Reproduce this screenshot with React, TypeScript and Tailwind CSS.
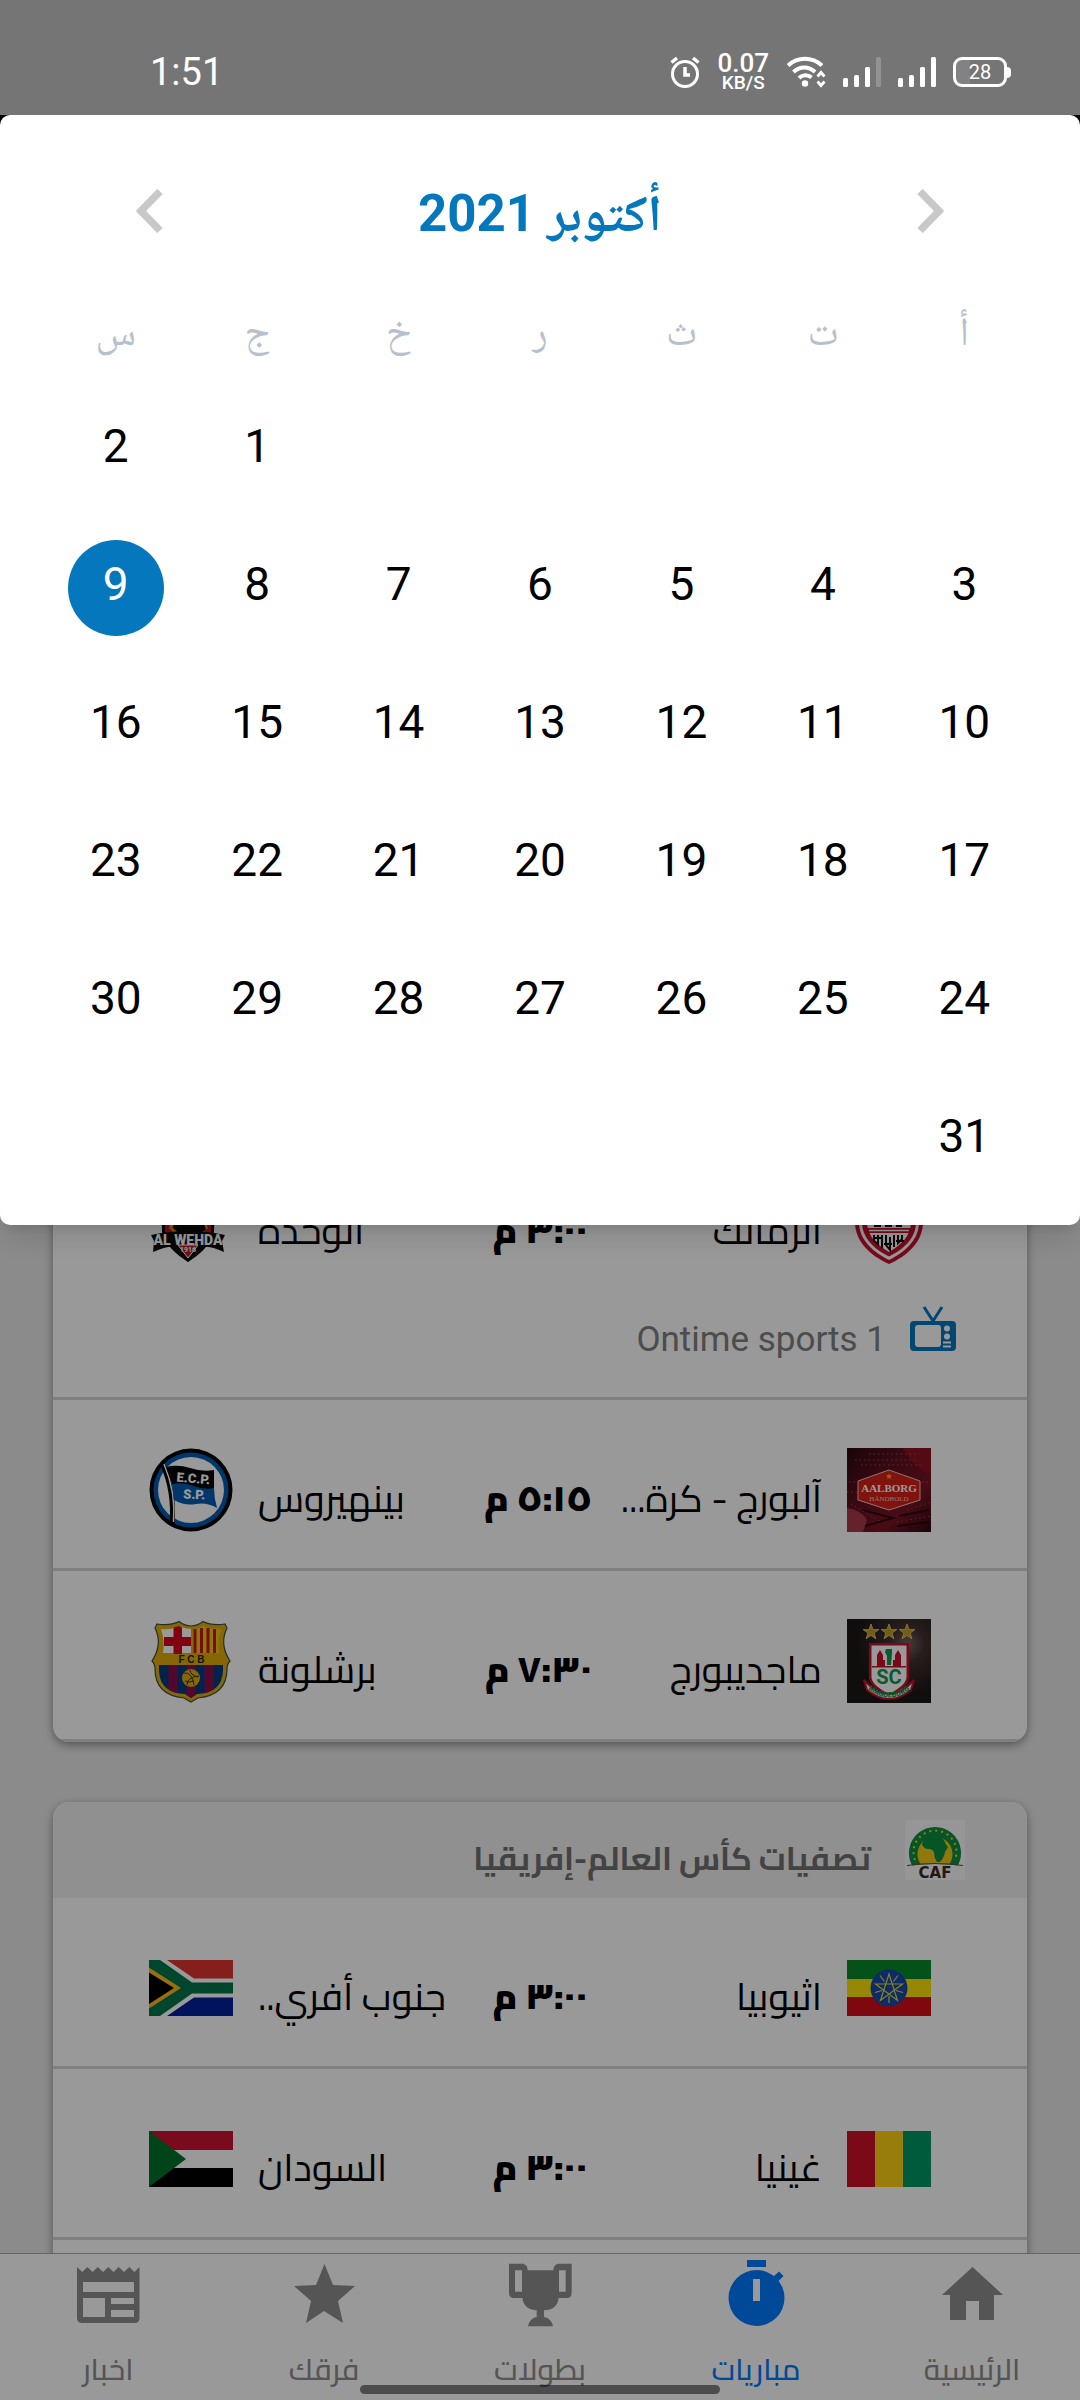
import type { ReactNode } from "react";

/* ---------- Status bar ---------- */

function AlarmIcon() {
  return (
    <svg viewBox="0 0 30 32" className="h-8 w-[30px]" fill="none" stroke="#fff" strokeWidth="3">
      <circle cx="15" cy="18" r="12.5" />
      <path d="M15 11v8h5" strokeWidth="3.5" />
      <path d="M1.5 6.5 7 2M28.5 6.5 23 2" strokeWidth="3.5" />
    </svg>
  );
}

function WifiIcon() {
  return (
    <svg viewBox="0 0 40 32" className="h-8 w-10" fill="none" stroke="#fff" strokeWidth="4">
      <path d="M2 9.5C12 .5 26 .5 36 9.5" />
      <path d="M7.500 16c6.500-6 15-6 21.500 0" />
      <path d="M13 22c3.500-3.500 9-3.500 12.500-.5" />
      <circle cx="19" cy="27.500" r="3.200" fill="#fff" stroke="none" />
      <path d="m31.500 20.500 3.500-4 3.500 4M31.500 25.500l3.500 4 3.500-4" strokeWidth="2.800" />
    </svg>
  );
}

function SignalIcon({ dimLast = false }: { dimLast?: boolean }) {
  return (
    <svg viewBox="0 0 38 30" className="h-[30px] w-[38px]" fill="#fff">
      <rect x="0" y="21" width="5" height="9" rx="1.500" />
      <rect x="11" y="18" width="5" height="12" rx="1.500" />
      <rect x="22" y="10" width="5" height="20" rx="1.500" />
      <rect x="33" y="0" width="5" height="30" rx="1.500" fill={dimLast ? "#929292" : "#fff"} />
    </svg>
  );
}

function StatusBar() {
  return (
    <div dir="ltr" className="flex h-[115px] shrink-0 items-center justify-between bg-[#757575] pt-[29px] pr-[69px] pl-[150px] font-['Roboto',sans-serif] text-white">
      <span className="text-[38px] leading-[44px]">1:51</span>
      <div className="flex items-center gap-[17px]">
        <AlarmIcon />
        <div className="flex flex-col items-center font-medium">
          <span className="text-[26px] leading-[22px]">0.07</span>
          <span className="text-[19px] leading-[18px]">KB/S</span>
        </div>
        <WifiIcon />
        <SignalIcon dimLast />
        <SignalIcon />
        <div className="flex items-center">
          <div className="flex h-[30px] w-[54px] items-center justify-center rounded-[9px] border-[3px] border-white bg-linear-to-r from-[#828282] from-30% to-transparent to-30% text-xl leading-5">
            28
          </div>
          <div className="h-[11px] w-1 rounded-r-sm bg-white" />
        </div>
      </div>
    </div>
  );
}

/* ---------- Calendar ---------- */

const WEEKDAYS = ["أ", "ت", "ث", "ر", "خ", "ج", "س"];
const SELECTED_DAY = 9;
const LEADING_BLANKS = 5;
const WEEKS: (number | null)[][] = Array.from({ length: 6 }, (_, week) =>
  Array.from({ length: 7 }, (_, day) => {
    const date = week * 7 + day - LEADING_BLANKS + 1;
    return date >= 1 && date <= 31 ? date : null;
  }),
);

function CalendarDialog() {
  return (
    <section role="dialog" aria-label="التقويم" className="absolute inset-x-0 top-0 rounded-[10px] bg-white px-[45px] pb-4 font-['Roboto','Noto_Naskh_Arabic',sans-serif] shadow-xl">
      <div className="flex h-[192px] items-center justify-between px-[72px]">
        <button type="button" aria-label="الشهر السابق" className="flex size-16 items-center justify-center">
          <svg viewBox="0 0 28 44" className="h-11 w-7" fill="none" stroke="#c8c8c8" strokeWidth="7.500">
            <path d="m3 2.500 19 19.500L3 41.500" />
          </svg>
        </button>
        <h2 className="pt-1.5 text-[51px] leading-[60px] font-bold text-[#0477bd]">أكتوبر 2021</h2>
        <button type="button" aria-label="الشهر التالي" className="flex size-16 items-center justify-center">
          <svg viewBox="0 0 28 44" className="h-11 w-7" fill="none" stroke="#c8c8c8" strokeWidth="7.500">
            <path d="M25 2.500 6 22l19 19.500" />
          </svg>
        </button>
      </div>
      <table className="w-full table-fixed text-center">
        <thead>
          <tr className="h-[74px]">
            {WEEKDAYS.map((day) => (
              <th key={day} scope="col" className="p-0 pb-6 text-center text-[40px] leading-[50px] font-normal text-[#b6c1cd]">
                {day}
              </th>
            ))}
          </tr>
        </thead>
        <tbody>
          {WEEKS.map((week, w) => (
            <tr key={w} className="h-[138px]">
              {week.map((date, d) => (
                <td key={d} className="p-0">
                  {date !== null && (
                    <button
                      type="button"
                      aria-pressed={date === SELECTED_DAY}
                      className={
                        date === SELECTED_DAY
                          ? "mx-auto flex size-24 items-center justify-center rounded-full bg-[#0477bd] pb-2 text-[46px] leading-[54px] text-white"
                          : "mx-auto flex size-24 items-center justify-center rounded-full pb-2 text-[46px] leading-[54px] text-black"
                      }
                    >
                      {date}
                    </button>
                  )}
                </td>
              ))}
            </tr>
          ))}
        </tbody>
      </table>
    </section>
  );
}

/* ---------- Club crests and flags ---------- */

function Crest({ children }: { children: ReactNode }) {
  return (
    <svg viewBox="0 0 84 84" direction="ltr" className="size-[84px] shrink-0" aria-hidden="true">
      {children}
    </svg>
  );
}

function ZamalekCrest() {
  return (
    <Crest>
      <path d="M8 4h68v38c0 20-16 34-34 42C24 76 8 62 8 42Z" fill="#c8102e" />
      <path d="M12 8h60v34c0 18-14 30-30 38C26 72 12 60 12 42Z" fill="#fff" />
      <path d="M15 11h54v31c0 16-12 27-27 34.500C27 69 15 58 15 42Z" fill="#c8102e" />
      <path d="M20 14h44v28c0 14-10 23-22 30C30 65 20 56 20 42Z" fill="#fff" />
      <path d="M27 44h7v3h-7zm11 0h7v3h-7zm11-1h6v4h-6z" fill="#111" />
      <path d="M17 48h50l-2 5H19Z" fill="#c8102e" />
      <path d="M22 50.500h40" stroke="#fff" strokeWidth="1.500" />
      <path d="M27 55v6l4 3V55m4 0v13m4-13v10l4 5V57m4-2v12m4-12v8l4-4v-4M26 58h8m3 6h8m4-3h8" stroke="#111" strokeWidth="2" fill="none" />
    </Crest>
  );
}

function WehdaCrest() {
  return (
    <Crest>
      <path d="M12 6h54l-1 46c-4 14-14 22-26 30C27 74 17 66 13 52Z" fill="#0c0c0c" />
      <path d="M16 10h46v42c-4 12-12 19-23 26C28 71 20 64 16 52Z" fill="#c01a26" />
      <path d="M24 34h30l5 14-8 8H28l-8-8Z" fill="#f08020" />
      <path d="M27 30h24l6 20-12 6H33L24 48Z" fill="#0c0c0c" />
      <path d="M2 55q37-8 74 0l-3 6 2 11Q62 66 53 67l-14 15-14-15Q18 66 4 72l1-11Z" fill="#0c0c0c" />
      <path d="M29 65h20l-10 13Z" fill="#c01a26" stroke="#fff" strokeWidth="1" />
      <text x="39" y="65" textAnchor="middle" fontFamily="Roboto, sans-serif" fontWeight="900" fontSize="14" fill="#fff">AL WEHDA</text>
      <text x="39" y="72" textAnchor="middle" fontFamily="Roboto, sans-serif" fontWeight="700" fontSize="7" fill="#fff">1916</text>
    </Crest>
  );
}

function AalborgCrest() {
  return (
    <Crest>
      <defs>
        <linearGradient id="aalborg-bg" x1="0" y1="0" x2="1" y2="1">
          <stop offset="0" stopColor="#2a0810" />
          <stop offset=".35" stopColor="#5c0f1e" />
          <stop offset=".7" stopColor="#7a1424" />
          <stop offset="1" stopColor="#2c0810" />
        </linearGradient>
      </defs>
      <rect width="84" height="84" fill="url(#aalborg-bg)" />
      <path d="M56 0h28v26q-16-4-28-26Z" fill="#8c1220" />
      <path d="M0 84V60q14 2 20 12l-4 12Z" fill="#a83a4c" />
      <path d="M8 12h60M14 17h60M22 6h50M2 34h18M66 34h18M4 56l30 18M60 62l24-8M50 74l34-6M0 44h10" stroke="#a04050" strokeWidth="1" strokeDasharray="1.500 3" />
      <path d="M16 62l30 8-28 8M52 68l30-6M50 78l32-4" stroke="#2c0810" strokeWidth="2" fill="none" />
      <path d="M42 22 73 33v19L42 62 11 52V33Z" fill="#d62018" stroke="#e8c8c0" strokeWidth="1" />
      <path d="m42 25.500 1 1.800 2 .2-1.500 1.400.4 2-1.900-1-1.900 1 .4-2-1.500-1.400 2-.2Z" fill="#f0a020" />
      <text x="42" y="43.500" textAnchor="middle" fontFamily="Liberation Serif, serif" fontWeight="700" fontSize="11" fill="#fff">AALBORG</text>
      <text x="42" y="52.500" textAnchor="middle" fontFamily="Liberation Serif, serif" fontSize="7" fill="#f0c0b8">HÅNDBOLD</text>
    </Crest>
  );
}

function PinheirosCrest() {
  return (
    <Crest>
      <circle cx="42" cy="42" r="41.500" fill="#050505" />
      <circle cx="42" cy="42" r="37.500" fill="#005ab0" />
      <circle cx="42" cy="42" r="33" fill="#fff" />
      <path d="M13 15q13 28 10 62" stroke="#050505" strokeWidth="5" fill="none" />
      <path d="M15 16q12 28 9.500 58" stroke="#fff" strokeWidth="1.500" fill="none" />
      <path d="M17 19q12-3 24 1t24 2v20q-22-1-42-6Z" fill="#050505" />
      <path d="M23 36q12-2 22 2t20 2q0 10 3 20-10-6-21-4t-22-4Z" fill="#005ab0" />
      <text x="44" y="35" textAnchor="middle" transform="rotate(5 44 35)" fontFamily="Roboto, sans-serif" fontWeight="900" fontSize="13" fill="#fff">E.C.P.</text>
      <text x="45" y="51" textAnchor="middle" transform="rotate(3 45 51)" fontFamily="Roboto, sans-serif" fontWeight="900" fontSize="13" fill="#fff">S.P.</text>
    </Crest>
  );
}

const STAR = "m0-8 2 5.600h5.800L3.200 1.100 4.900 6.800 0 3.400l-4.900 3.400 1.700-5.700-4.600-3.500H-2Z";

function MagdeburgCrest() {
  return (
    <Crest>
      <defs>
        <radialGradient id="magdeburg-bg" cx=".72" cy=".3" r=".6">
          <stop offset="0" stopColor="#7a6260" />
          <stop offset=".35" stopColor="#40302f" />
          <stop offset="1" stopColor="#1c1716" />
        </radialGradient>
      </defs>
      <rect width="84" height="84" fill="url(#magdeburg-bg)" />
      {["translate(24 13)", "translate(42 13)", "translate(60 13)"].map((place) => (
        <path key={place} d={STAR} transform={place} fill="#c09a20" stroke="#e8d080" strokeWidth=".8" />
      ))}
      <path d="M22 24h40v34q0 10-20 20-20-10-20-20Z" fill="#c8102e" />
      <path d="M24.500 26.500h35V58q0 8-17.500 17Q24.500 66 24.500 58Z" fill="#fff" />
      <path d="M30 47V36l3-5 3 5v5h2v6zm24 0V36l-3-5-3 5v5h-2v6zM25 47h34v1.500H25z" fill="#c8102e" />
      <path d="M40 46v-9l-2-4 1-3h6v4l-1 12Z" fill="#13944f" />
      <path d="M17 61q25 28 50 0l-3 10q-22 18-44 0Z" fill="#fff" stroke="#c8102e" strokeWidth="2" />
      <path id="magdeburg-arc" d="M18 68q24 21 48 0" fill="none" />
      <text fontFamily="Roboto, sans-serif" fontWeight="900" fontSize="7.500" fill="#13944f">
        <textPath href="#magdeburg-arc" startOffset="50%" textAnchor="middle">MAGDEBURG</textPath>
      </text>
      <text x="42" y="65" textAnchor="middle" fontFamily="Roboto, sans-serif" fontWeight="700" fontSize="20" fill="#13944f">SC</text>
    </Crest>
  );
}

function BarcelonaCrest() {
  return (
    <Crest>
      <defs>
        <clipPath id="barca-lower">
          <path d="M10 46h64v6q-1 22-26 23l-6 4-6-4Q11 74 10 52Z" />
        </clipPath>
      </defs>
      <path d="M8 5q13 2 22-2.500Q36 7 42 7t12-4.500Q63 7 76 5l2 4q-8 16 3 33-3 3-3 8 0 26-29 29l-7 4-7-4Q6 76 6 50q0-5-3-8Q14 25 6 9Z" fill="#e0ac0c" stroke="#3c4a48" strokeWidth="1.200" />
      <path d="M12 10q10 1 18-3 6 3 12 3v24H14q2-12-2-24Z" fill="#fff" />
      <path d="M24.500 8.500 30 7l3 1.500V18h9v9h-9v8h-8.500v-8h-9.500v-9h9.500Z" fill="#d8061c" />
      <path d="M44 10q6 0 10-3 7 3 18 3-4 12-2 24H44Z" fill="#f0c414" />
      <path d="M46 10v24M52.500 9v25M59 9v25M65.500 10v24" stroke="#c01a20" strokeWidth="3" />
      <g clipPath="url(#barca-lower)">
        <rect x="8" y="46" width="68" height="34" fill="#003a80" />
        <path d="M24 46v34M42 46v34M60 46v34" stroke="#8c0c4a" strokeWidth="9" />
      </g>
      <circle cx="42" cy="59" r="9" fill="#e0ac0c" />
      <path d="M35 54q8-1 10 12M38 66q0-8 12-9M36 62q4 2 9 0M41 51q0 5 8 7" stroke="#3c3010" strokeWidth="1" fill="none" />
      <text x="42.500" y="44" textAnchor="middle" fontFamily="Liberation Sans, sans-serif" fontWeight="700" fontSize="10" fill="#1c2418">F C B</text>
    </Crest>
  );
}

function EthiopiaFlag() {
  return (
    <Crest>
      <path d="M0 14h84v19H0z" fill="#07872c" />
      <path d="M0 33h84v18H0z" fill="#fde00a" />
      <path d="M0 51h84v19H0z" fill="#d30e18" />
      <circle cx="42" cy="42" r="18.500" fill="#1648aa" />
      <path d="m42 28 8.500 26.500L28.500 38h27L33.500 54.500ZM42 50v7M49 44.500l7 2M46.500 35.500l4.500-6M37.500 35.500l-4.500-6M35 44.500l-7 2" fill="none" stroke="#e8d83c" strokeWidth="1.200" />
    </Crest>
  );
}

function SouthAfricaFlag() {
  return (
    <Crest>
      <path d="M0 14h84v28H0z" fill="#dc352f" />
      <path d="M0 42h84v28H0z" fill="#002199" />
      <path d="M0 14h18l27 18.500h39v19H45L18 70H0Z" fill="#fff" />
      <path d="M0 14h11l32 22.500h41v11H43L11 70H0Z" fill="#00754a" />
      <path d="M0 21.500 32 42 0 62.500Z" fill="#ffb81c" />
      <path d="M0 26.500 25 42 0 58Z" fill="#000" />
    </Crest>
  );
}

function GuineaFlag() {
  return (
    <Crest>
      <path d="M0 14h28v56H0z" fill="#cb1128" />
      <path d="M28 14h28v56H28z" fill="#fdd017" />
      <path d="M56 14h28v56H56z" fill="#009664" />
    </Crest>
  );
}

function SudanFlag() {
  return (
    <Crest>
      <path d="M0 14h84v19H0z" fill="#cc1133" />
      <path d="M0 33h84v18H0z" fill="#fff" />
      <path d="M0 51h84v19H0z" fill="#000" />
      <path d="M0 14 37 42 0 70Z" fill="#00732a" />
    </Crest>
  );
}

function CafLogo() {
  return (
    <svg viewBox="0 0 60 60" direction="ltr" className="size-[60px] shrink-0" aria-hidden="true">
      <rect width="60" height="60" fill="#fbfbfb" />
      <path d="M7.500 46a26 26 0 1 1 45 0Z" fill="#0c8c40" />
      <path d="M10 40a21.500 21.500 0 1 1 40 0" fill="none" stroke="#e8dc30" strokeWidth="2" strokeDasharray="2 4" />
      <path d="M15.500 44a17.500 17.500 0 1 1 29 0Z" fill="#f0c818" />
      <path d="M22 17q6-4 13-1l4 4q1 4 4 7l-3 5q-1 6-5 10h-3q-3-4-3-9-1-4-5-4-6 0-7-5 1-4 5-7Z" fill="#0c8c40" />
      <path d="M2 46q28-4 56 0v14H2Z" fill="#fbfbfb" />
      <path d="M2 45.500q28-4 56 0" stroke="#5c4c44" strokeWidth="1.200" fill="none" />
      <text x="30" y="57.500" textAnchor="middle" fontFamily="DejaVu Sans, sans-serif" fontWeight="700" fontSize="15" fill="#3c2824">CAF</text>
    </svg>
  );
}

function TvIcon() {
  return (
    <svg viewBox="0 0 46 46" className="size-[46px] shrink-0" aria-hidden="true">
      <path d="M14 1l9 14 9-14" fill="none" stroke="#0477bd" strokeWidth="3" />
      <path fillRule="evenodd" d="M4 15h38q4 0 4 4v22q0 4-4 4H4q-4 0-4-4V19q0-4 4-4Zm4 4q-3 0-3 3v16q0 3 3 3h20q3 0 3-3V22q0-3-3-3Z" fill="#0477bd" />
      <circle cx="37" cy="22.500" r="3" fill="#fff" />
      <circle cx="37" cy="30.500" r="3" fill="#fff" />
      <path d="M33 36.500h8M33 40.500h8" stroke="#fff" strokeWidth="2" />
    </svg>
  );
}

/* ---------- Match list ---------- */

type Match = {
  home: string;
  away: string;
  time: string;
  homeCrest: ReactNode;
  awayCrest: ReactNode;
  channel?: string;
};

const CLUB_MATCHES: Match[] = [
  { home: "الزمالك", away: "الوحدة", time: "٣:٠٠ م", homeCrest: <ZamalekCrest />, awayCrest: <WehdaCrest />, channel: "Ontime sports 1" },
  { home: "آلبورج - كرة...", away: "بينهيروس", time: "٥:١٥ م", homeCrest: <AalborgCrest />, awayCrest: <PinheirosCrest /> },
  { home: "ماجديبورج", away: "برشلونة", time: "٧:٣٠ م", homeCrest: <MagdeburgCrest />, awayCrest: <BarcelonaCrest /> },
];

const AFRICA_MATCHES: Match[] = [
  { home: "اثيوبيا", away: "جنوب أفري..", time: "٣:٠٠ م", homeCrest: <EthiopiaFlag />, awayCrest: <SouthAfricaFlag /> },
  { home: "غينيا", away: "السودان", time: "٣:٠٠ م", homeCrest: <GuineaFlag />, awayCrest: <SudanFlag /> },
];

function MatchRow({ match }: { match: Match }) {
  return (
    <li className="border-b-[3px] border-[#d4d4d4]">
      <div className="grid h-[168px] grid-cols-[1fr_104px_1fr] items-start px-24 pt-12 text-[38px] leading-[60px] text-black">
        <div className="flex items-start gap-[25px]">
          {match.homeCrest}
          <span className="pt-5 whitespace-nowrap">{match.home}</span>
        </div>
        <span className="pt-5 text-center text-4xl leading-[60px] font-black whitespace-nowrap">{match.time}</span>
        <div className="flex items-start justify-end gap-[25px]">
          <span className="pt-5 whitespace-nowrap">{match.away}</span>
          {match.awayCrest}
        </div>
      </div>
      {match.channel && (
        <div className="flex h-[97px] items-start gap-6 px-[71px] pt-[6px] text-[#808080]">
          <TvIcon />
          <span className="pt-[10px] font-['Roboto',sans-serif] text-[35px] leading-[48px]">{match.channel}</span>
        </div>
      )}
    </li>
  );
}

function MatchCard({ title, logo, matches, loadingMore = false }: { title?: string; logo?: ReactNode; matches: Match[]; loadingMore?: boolean }) {
  return (
    <section className="overflow-hidden rounded-2xl bg-white shadow-[0_3px_10px_rgba(0,0,0,0.4)]">
      {title && (
        <header className="flex h-24 items-center gap-[34px] bg-[#f1f1f1] px-[62px]">
          {logo}
          <h3 className="pt-4 text-[32px] leading-[60px] font-bold text-[#717171]">{title}</h3>
        </header>
      )}
      <ul>
        {matches.map((match) => (
          <MatchRow key={match.home} match={match} />
        ))}
        {loadingMore && <li aria-hidden="true" className="h-[168px]" />}
      </ul>
    </section>
  );
}

/* ---------- Bottom navigation ---------- */

function NavIcon({ viewBox = "0 0 64 68", children }: { viewBox?: string; children: ReactNode }) {
  return (
    <svg viewBox={viewBox} className="h-[68px] w-16" fill="currentColor" aria-hidden="true">
      {children}
    </svg>
  );
}

const TABS = [
  {
    label: "الرئيسية",
    icon: (
      <NavIcon>
        <path d="M32.500 7 63 35h-9v25H39V41H26v19H10V35H2Z" />
      </NavIcon>
    ),
  },
  {
    label: "مباريات",
    active: true,
    icon: (
      <NavIcon>
        <path d="M23 0h19v7H23z" />
        <path fillRule="evenodd" d="M32.500 10a28 28 0 1 1 0 56 28 28 0 0 1 0-56ZM29 19v22h7V19Z" />
        <path d="m49 17 6-5.500 4.500 4.500-6 6Z" />
      </NavIcon>
    ),
  },
  {
    label: "بطولات",
    icon: (
      <NavIcon viewBox="24 14 192 204">
        <path fillRule="evenodd" d="M27 25h42q14 4 14 20h77q0-16 14-20h41v88q0 15-15 15h-24q-4 36-44 37v20q22 4 27 28H84q5-24 26-28v-20q-38-2-43-37H42q-15 0-15-15Zm18 20v64h21V45Zm132 0v64h20V45Z" />
      </NavIcon>
    ),
  },
  {
    label: "فرقك",
    icon: (
      <NavIcon>
        <path d="m32.500 4 8.500 21 22 1-17 15 5 22-19-12-18 12 5-22L2 26l22-1Z" />
      </NavIcon>
    ),
  },
  {
    label: "اخبار",
    icon: (
      <NavIcon>
        <path fillRule="evenodd" d="m1 7 5.200 5 5.200-5 5.200 5 5.200-5 5.300 5 5.200-5 5.200 5 5.300-5 5.200 5 5.200-5 5.200 5 5.100-5v51q0 5-5 5H6q-5 0-5-5Zm6 15v10h51V22Zm0 16v19h22V38Zm28 0v6h23v-6Zm0 12v7h23v-7Z" />
      </NavIcon>
    ),
  },
];

function BottomNav() {
  return (
    <nav className="relative grid h-[147px] shrink-0 grid-cols-5 border-t border-[#aaaaaa] bg-white pt-[6px]">
      {TABS.map((tab) => (
        <a
          key={tab.label}
          href="#"
          aria-current={tab.active ? "page" : undefined}
          className={tab.active ? "flex flex-col items-center gap-4 text-[#007aff]" : "flex flex-col items-center gap-4 text-[#8e8e90]"}
        >
          {tab.icon}
          <span className="text-[30px] leading-[50px] font-medium">{tab.label}</span>
        </a>
      ))}
      <div className="absolute bottom-[6px] left-1/2 h-[9px] w-1/3 -translate-x-1/2 rounded-full bg-black/50" />
    </nav>
  );
}

export default function App() {
  return (
    <div dir="rtl" lang="ar" className="flex h-screen flex-col overflow-hidden font-['Cairo','Noto_Sans_Arabic','DejaVu_Sans',sans-serif]">
      <StatusBar />
      <div className="relative flex min-h-0 flex-1 flex-col">
        <div className="h-[168px] shrink-0 bg-black" />
        <main className="flex min-h-0 flex-1 flex-col overflow-hidden bg-[#e8e8e8] px-[53px] pt-[849px]">
          <div className="flex flex-col gap-[60px]">
            <MatchCard matches={CLUB_MATCHES} />
            <MatchCard title="تصفيات كأس العالم-إفريقيا" logo={<CafLogo />} matches={AFRICA_MATCHES} loadingMore />
          </div>
        </main>
        <BottomNav />
        <div className="absolute inset-0 bg-black/40" />
        <CalendarDialog />
      </div>
    </div>
  );
}
